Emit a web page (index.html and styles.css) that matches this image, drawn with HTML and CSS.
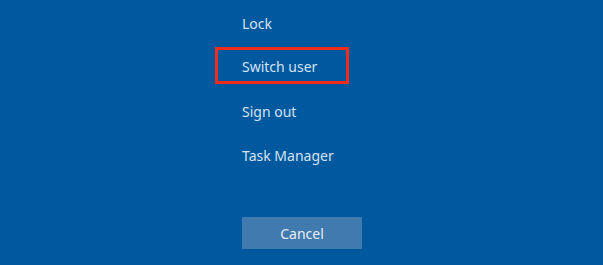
FILE: index.html
```html
<!DOCTYPE html>
<html>
<head>
<meta charset="utf-8">
<title>Security options</title>
<link rel="stylesheet" href="styles.css">
</head>
<body>
  <div class="options">
    <div class="menu">
      <div class="item">Lock</div>
      <div class="item selected">Switch user</div>
      <div class="item">Sign out</div>
      <div class="item">Task Manager</div>
    </div>
    <button class="cancel">Cancel</button>
  </div>
</body>
</html>
```

FILE: styles.css
```css
html, body
{
  margin: 0;
  padding: 0;
  height: 100%;
}

body
{
  background: #00599f;
  color: #d3e2f1;
  font-family: "Noto Sans", "Open Sans", sans-serif;
  font-size: 14px;
  overflow: hidden;
}

.options
{
  display: flex;
  flex-direction: column;
  align-items: flex-start;
  padding-left: 215px;
}

.menu
{
  display: flex;
  flex-direction: column;
}

.item
{
  box-sizing: border-box;
  width: 134px;
  height: 37px;
  margin: 3px 0 4px;
  padding: 3px 0 0 27px;
  display: flex;
  align-items: center;
}

.item.selected /* the focused entry */
{
  border: 3px solid #f22b1b;
  padding: 1px 0 0 24px;
}

.cancel
{
  margin: 41px 0 0 27px;
  width: 120px;
  height: 32px;
  border: none;
  background: #417aae;
  color: #e6eef6;
  font-family: inherit;
  font-size: 14px;
  padding: 0;
}
```
